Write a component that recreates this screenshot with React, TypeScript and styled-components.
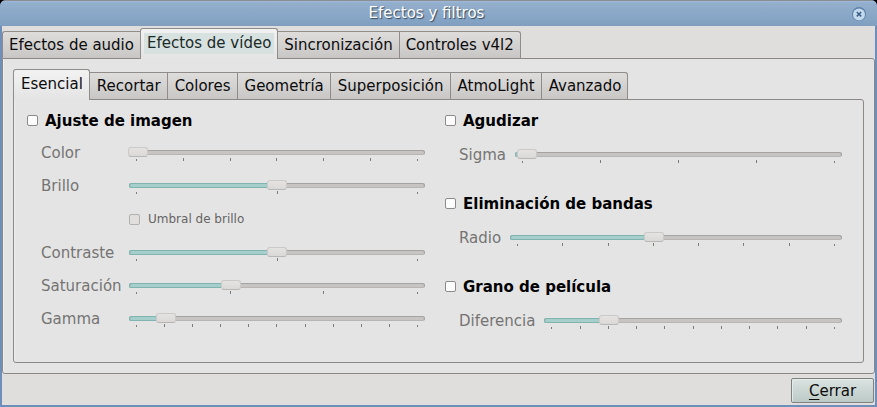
import React, { useState } from "react";
import styled, { createGlobalStyle, css } from "styled-components";

const LINE = "#8b8885";
const PANE = "#e4e4e4";

const GlobalStyle = createGlobalStyle`
  *, *::before, *::after { box-sizing: border-box; }
  body {
    margin: 0;
    background: #000;
    font-family: "DejaVu Sans", sans-serif;
    font-size: 15px;
    color: #0c0c0c;
  }
  button, input { font: inherit; color: inherit; margin: 0; }
`;

const Window = styled.div`
  display: flex;
  flex-direction: column;
  min-height: 100vh;
  border-radius: 6px 6px 0 0;
  background: #6d8fb9;
  overflow: hidden;
`;

const TitleBar = styled.header`
  display: flex;
  align-items: center;
  height: 26px;
  padding: 0 10px 0 2px;
  border-top: 1px solid #8c8f92;
  background: linear-gradient(#9ebad8 0, #93afcd 2px, #809fc0 100%);
`;

const Title = styled.h1`
  flex: 1;
  margin: 0;
  font-size: 15px;
  font-weight: 400;
  line-height: 25px;
  text-align: center;
  color: #fff;
  text-shadow: 1px 1px 1px #33475c;
`;

const CloseButton = styled.button`
  display: flex;
  padding: 0;
  border: 0;
  background: none;
`;

const Body = styled.main`
  flex: 1;
  display: flex;
  flex-direction: column;
  margin: 0 2px 2px;
  padding-top: 2px;
  background: #dfdedc;
`;

const TabSet = styled.div`
  flex: 1;
  display: flex;
  flex-direction: column;
`;

const TabList = styled.div`
  display: flex;
  align-items: flex-end;
  position: relative;
  margin-bottom: -1px;
`;

const Tab = styled.button<{ $active: boolean; $nested?: boolean }>`
  height: 27px;
  padding: ${(p) => (p.$nested ? "0 6px 0 7px" : "0 6px")};
  margin-bottom: 1px;
  border: 0 solid #8f8c89;
  border-width: 1px 0 0 1px;
  background: linear-gradient(#dedddc, #c9c7c6);
  line-height: 25px;
  white-space: nowrap;

  &:first-child { border-top-left-radius: 3px; }
  &:last-child { border-right-width: 1px; border-top-right-radius: 3px; }

  ${(p) =>
    p.$active &&
    css`
      height: 31px;
      padding-bottom: 2px;
      margin-bottom: 0;
      border-width: 1px 1px 0 1px;
      border-radius: 3px 3px 0 0;
      background: linear-gradient(#f2f2f2, ${PANE});
      & + button { border-left-width: 0; }
    `}
`;

const TabText = styled.span<{ $focus?: boolean }>`
  display: block;
  line-height: 21px;
  ${(p) =>
    p.$focus &&
    css`
      margin: 0 -3px;
      padding: 0 3px;
      background: #d6e1e0;
      color: #1c2a28;
    `}
`;

const Pane = styled.section<{ $outer?: boolean }>`
  flex: 1;
  display: flex;
  flex-direction: column;
  border: 1px solid ${LINE};
  border-radius: 0 3px 3px 3px;
  background: ${PANE};
  box-shadow: inset 1px 0 0 #eeeeed;
  padding: ${(p) => (p.$outer ? "10px" : "5px 20px 5px 13px")};
`;

const Columns = styled.div`
  display: grid;
  grid-template-columns: minmax(0, 399fr) minmax(0, 398fr);
  column-gap: 19px;
`;

const Column = styled.div`
  display: flex;
  flex-direction: column;
  gap: 17px;
`;

const Group = styled.fieldset`
  display: flex;
  flex-direction: column;
  min-width: 0;
  margin: 0;
  padding: 0;
  border: 0;
`;

const GroupHeading = styled.label`
  display: flex;
  align-items: center;
  gap: 7px;
  height: 31px;
  font-weight: 700;
  color: #000;
`;

const Check = styled.input`
  appearance: none;
  flex: none;
  width: 11px;
  height: 11px;
  border: 1px solid #8d8b89;
  border-radius: 2px;
  background: #fdfdfd;

  &:checked { background: #6fb3ad; }
  &:disabled { border-color: #b3b1af; background: #e0dfde; }
`;

const AlignedRows = styled.div`
  display: grid;
  grid-template-columns: 78px minmax(0, 1fr);
  grid-template-rows: 33px 33px 34px;
  grid-auto-rows: 33px;
  column-gap: 9px;
  padding-left: 14px;
`;

const InlineRow = styled.div`
  display: flex;
  gap: 8px;
  height: 35px;
  padding: 2px 0 0 14px;
`;

const RowLabel = styled.label`
  line-height: 35px;
  color: #757473;
  white-space: nowrap;
`;

const SubOption = styled.label`
  grid-column: 2;
  display: flex;
  align-items: center;
  gap: 8px;
  padding-left: 1px;
  font-size: 12px;
  color: #666564;
`;

const SliderBox = styled.div`
  flex: 1;
  display: grid;
  grid-template-rows: 10px 1px 3px;
  align-content: start;
  padding-top: 11px;
`;

const Rail = styled.span`
  grid-area: 1 / 1;
  display: block;
  height: 5px;
  margin: 3px 1px 0;
  border: 1px solid #a5a3a1;
  border-bottom-color: #b8b6b4;
  border-radius: 3px;
  background: #c7c5c3;
`;

const Fill = styled.span`
  display: block;
  height: 5px;
  margin: -1px 0 0 -1px;
  border: 1px solid #80b4b0;
  border-right: 0;
  border-radius: 3px 0 0 3px;
  background: #a6cfcb;
`;

const Range = styled.input`
  grid-area: 1 / 1;
  appearance: none;
  width: 100%;
  height: 10px;
  background: none;

  &::-webkit-slider-thumb {
    appearance: none;
    width: 20px;
    height: 10px;
    border: 1px solid #cbc9c8;
    border-bottom-color: #b9b7b5;
    border-radius: 3px;
    background: linear-gradient(#e4e3e2, #dad9d7);
  }
`;

const Ticks = styled.div`
  grid-row: 3;
  display: flex;
  justify-content: space-between;
  align-items: flex-end;
  padding: 0 8px;
`;

const Tick = styled.i`
  width: 1px;
  height: 3px;
  background: #7d7c7b;
  &:first-child, &:last-child { height: 2px; }
`;

const Footer = styled.footer`
  display: flex;
  justify-content: flex-end;
  padding: 4px 1px 2px;
`;

const PushButton = styled.button`
  min-width: 83px;
  height: 25px;
  padding: 0 16px;
  border: 1px solid #80827f;
  border-radius: 2px;
  background: linear-gradient(#dae3e1, #bccac6);
  box-shadow: inset 1px 1px 0 #e3ebe9;
  line-height: 22px;
`;

const Mnemonic = styled.span`
  text-decoration: underline;
  text-underline-offset: 3px;
  text-decoration-thickness: 1px;
`;

type SliderProps = { id: string; max: number; initial: number; ticks: number };

function Slider({ id, max, initial, ticks }: SliderProps) {
  const [value, setValue] = useState(initial);
  return (
    <SliderBox>
      <Rail>
        {value > 0 && <Fill style={{ width: `${(value / max) * 100}%` }} />}
      </Rail>
      <Range
        id={id}
        type="range"
        min={0}
        max={max}
        value={value}
        disabled
        onChange={(e) => setValue(Number(e.target.value))}
      />
      <Ticks aria-hidden>
        {Array.from({ length: ticks }, (_, i) => (
          <Tick key={i} />
        ))}
      </Ticks>
    </SliderBox>
  );
}

type Setting = SliderProps & { label: string };

const adjustTop: Setting[] = [
  { id: "color", label: "Color", max: 360, initial: 0, ticks: 7 },
  { id: "brillo", label: "Brillo", max: 200, initial: 100, ticks: 3 },
];

const adjustBottom: Setting[] = [
  { id: "contraste", label: "Contraste", max: 200, initial: 100, ticks: 3 },
  { id: "saturacion", label: "Saturación", max: 300, initial: 100, ticks: 4 },
  { id: "gamma", label: "Gamma", max: 100, initial: 10, ticks: 11 },
];

const filters: { title: string; setting: Setting }[] = [
  { title: "Agudizar", setting: { id: "sigma", label: "Sigma", max: 200, initial: 2, ticks: 5 } },
  { title: "Eliminación de bandas", setting: { id: "radio", label: "Radio", max: 28, initial: 12, ticks: 8 } },
  { title: "Grano de película", setting: { id: "diferencia", label: "Diferencia", max: 10, initial: 2, ticks: 11 } },
];

function Settings({ items }: { items: Setting[] }) {
  return (
    <>
      {items.map(({ label, ...slider }) => (
        <React.Fragment key={slider.id}>
          <RowLabel htmlFor={slider.id}>{label}</RowLabel>
          <Slider {...slider} />
        </React.Fragment>
      ))}
    </>
  );
}

type TabsProps = { label: string; names: string[]; active: string; focus?: boolean; nested?: boolean };

function Tabs({ label, names, active, focus, nested }: TabsProps) {
  return (
    <TabList role="tablist" aria-label={label}>
      {names.map((name) => (
        <Tab
          key={name}
          type="button"
          role="tab"
          aria-selected={name === active}
          $active={name === active}
          $nested={nested}
        >
          <TabText $focus={focus && name === active}>{name}</TabText>
        </Tab>
      ))}
    </TabList>
  );
}

export default function App() {
  return (
    <>
      <GlobalStyle />
      <Window>
        <TitleBar>
          <Title>Efectos y filtros</Title>
          <CloseButton type="button" aria-label="Cerrar ventana">
            <svg width="16" height="16" viewBox="0 0 16 16" aria-hidden>
              <circle cx="8" cy="8" r="7" fill="#5d80a6" />
              <circle cx="8" cy="8.5" r="6" fill="#c3d9ee" />
              <path d="M5.8 6l4.4 4.4M10.2 6l-4.4 4.4" stroke="#3c5f86" strokeWidth="1.5" />
            </svg>
          </CloseButton>
        </TitleBar>
        <Body>
          <TabSet>
            <Tabs
              label="Efectos"
              names={["Efectos de audio", "Efectos de vídeo", "Sincronización", "Controles v4l2"]}
              active="Efectos de vídeo"
              focus
            />
            <Pane $outer>
              <TabSet>
                <Tabs
                  label="Vídeo"
                  names={["Esencial", "Recortar", "Colores", "Geometría", "Superposición", "AtmoLight", "Avanzado"]}
                  active="Esencial"
                  nested
                />
                <Pane>
                  <Columns>
                    <Group>
                      <GroupHeading>
                        <Check type="checkbox" />
                        Ajuste de imagen
                      </GroupHeading>
                      <AlignedRows>
                        <Settings items={adjustTop} />
                        <SubOption>
                          <Check type="checkbox" disabled />
                          Umbral de brillo
                        </SubOption>
                        <Settings items={adjustBottom} />
                      </AlignedRows>
                    </Group>
                    <Column>
                      {filters.map(({ title, setting }) => (
                        <Group key={title}>
                          <GroupHeading>
                            <Check type="checkbox" />
                            {title}
                          </GroupHeading>
                          <InlineRow>
                            <Settings items={[setting]} />
                          </InlineRow>
                        </Group>
                      ))}
                    </Column>
                  </Columns>
                </Pane>
              </TabSet>
            </Pane>
          </TabSet>
          <Footer>
            <PushButton type="button">
              <Mnemonic>C</Mnemonic>errar
            </PushButton>
          </Footer>
        </Body>
      </Window>
    </>
  );
}
